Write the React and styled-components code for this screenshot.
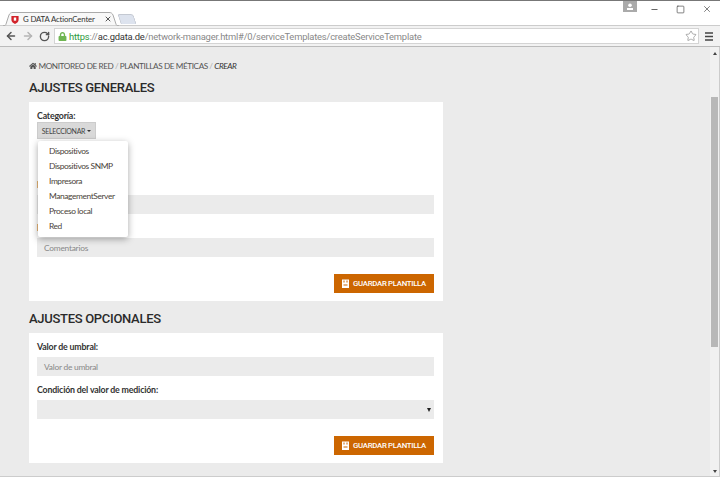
import React from "react"
import styled, { createGlobalStyle } from "styled-components"
import { FaHome, FaLock } from "react-icons/fa"
import { Star, ArrowLeft, ArrowRight, RotateCw, Minus, Square, X } from "lucide-react"

const GlobalStyle = createGlobalStyle`
  html, body { margin: 0; padding: 0; height: 100%; overflow: hidden; }
  * { box-sizing: border-box; }
  body { font-family: "Lato", "Noto Sans", sans-serif; }
`

const Browser = styled.div`
  width: 720px;
  height: 477px;
  display: flex;
  flex-direction: column;
  border-top: 1px solid #777;
  border-bottom: 1px solid #ccc;
  background: #fff;
  overflow: hidden;
`

const TabStrip = styled.div`
  height: 24px;
  flex: none;
  display: flex;
  align-items: flex-end;
  padding-left: 3px;
  background: #fff;
`

const Tab = styled.div`
  width: 115px;
  height: 14px;
  margin-bottom: -1px;
  position: relative;
  display: flex;
  align-items: center;
  gap: 4px;
  padding: 0 6px 0 8px;
  font-size: 7.8px;
  color: #333;
  white-space: nowrap;
  z-index: 1;

  svg { flex: none; position: relative; }
`

const TabShape = styled.svg`
  position: absolute !important;
  left: 0;
  top: 0;
`

const TabTitle = styled.span`
  flex: 1;
  position: relative;
  letter-spacing: -0.15px;
`

const NewTab = styled.div`
  width: 16px;
  height: 10px;
  margin: 0 0 1px 1px;
  background: #dde3ee;
  border: 1px solid #c4c9d2;
  border-bottom: none;
  border-radius: 2px 3px 0 0;
  transform: skewX(18deg);
`

const WindowControls = styled.div`
  margin-left: auto;
  align-self: flex-start;
  display: flex;
  align-items: flex-start;
  padding-right: 8px;
  color: #333;
`

const Profile = styled.div`
  width: 14px;
  height: 11px;
  margin-right: 12px;
  display: flex;
  align-items: center;
  justify-content: center;
  background: #aaa;
`

const WinButton = styled.div`
  width: 10px;
  height: 16px;
  margin-left: ${props => props.gap}px;
  display: flex;
  align-items: center;
  justify-content: center;
`

const Toolbar = styled.div`
  height: 22px;
  flex: none;
  display: flex;
  align-items: center;
  padding: 0 1px 0 2px;
  background: #f2f2f2;
  border-top: 1px solid #ccc;
  border-bottom: 1px solid #bbb;
  color: #555;
`

const NavButton = styled.div`
  width: 17px;
  display: flex;
  justify-content: center;
  color: ${props => props.disabled ? "#b5b5b5" : "#555"};
`

const Omnibox = styled.div`
  flex: 1;
  height: 16px;
  margin-left: 1px;
  display: flex;
  align-items: center;
  padding: 0 1px 0 3px;
  background: #fff;
  border: 1px solid #d4d4d4;
  font-family: "Roboto", sans-serif;
  font-size: 9.4px;
  letter-spacing: -0.2px;
  white-space: nowrap;
  color: #888;
`

const UrlScheme = styled.span`
  color: #2e9a3b;
  margin-left: 2px;
`

const UrlHost = styled.span`
  color: #333;
`

const UrlSpacer = styled.span`
  flex: 1;
`

const MenuButton = styled.div`
  width: 20px;
  display: flex;
  justify-content: center;
  color: #444;
`

const Viewport = styled.div`
  flex: 1;
  display: flex;
  min-height: 0;
  background: #ebebeb;
`

const Page = styled.div`
  flex: 1;
  padding: 12px 0 0 29px;
  overflow: hidden;
`

const Column = styled.div`
  width: 414px;
`

const Breadcrumb = styled.div`
  display: flex;
  align-items: center;
  gap: 1.5px;
  height: 13px;
  font-size: 8.2px;
  letter-spacing: -0.4px;
  color: #555;
  white-space: nowrap;
`

const Crumb = styled.span`
  font-style: ${props => props.current ? "italic" : "normal"};
  color: ${props => props.current ? "#333" : "#555"};
`

const Divider = styled.span`
  color: #aaa;
`

const Heading = styled.h2`
  margin: 7px 0 5px;
  height: 18px;
  line-height: 18px;
  font-family: "Roboto", sans-serif;
  font-size: 13px;
  font-weight: 500;
  letter-spacing: -0.3px;
  color: #2a2a2a;
`

const Card = styled.div`
  background: #fff;
  padding: 7px 9px 8px 8px;
  margin-bottom: 9px;
  position: relative;
`

const Label = styled.label`
  display: block;
  height: 13px;
  line-height: 13px;
  font-size: 8.8px;
  font-weight: 700;
  letter-spacing: -0.18px;
  color: #333;
`

const Field = styled.div`
  margin-top: ${props => props.top || 0}px;
`

const Input = styled.div`
  height: 19px;
  margin-top: 4px;
  padding: 0 7px;
  display: flex;
  align-items: center;
  justify-content: space-between;
  background: #ebebeb;
  font-size: 8.4px;
  letter-spacing: -0.25px;
  color: #888;
`

const Caret = styled.span`
  width: 0;
  height: 0;
  border-left: 2px solid transparent;
  border-right: 2px solid transparent;
  border-top: 4px solid #222;
  margin-right: -4px;
`

const SelectWrap = styled.div`
  position: relative;
`

const SelectButton = styled.div`
  width: 59px;
  height: 17px;
  display: flex;
  align-items: center;
  justify-content: center;
  gap: 2px;
  background: #d9d9d9;
  border: 1px solid #ccc;
  font-size: 7px;
  letter-spacing: -0.3px;
  color: #444;
`

const SmallCaret = styled.span`
  width: 0;
  height: 0;
  border-left: 2.5px solid transparent;
  border-right: 2.5px solid transparent;
  border-top: 2.5px solid #333;
`

const Dropdown = styled.ul`
  position: absolute;
  top: 19px;
  left: 1px;
  width: 90px;
  height: 96px;
  margin: 0;
  padding: 3px 0;
  list-style: none;
  background: #fff;
  border-radius: 2px;
  box-shadow: 0 2px 7px rgba(0, 0, 0, 0.35);
  z-index: 2;
`

const DropItem = styled.li`
  height: 15px;
  line-height: 15px;
  padding-left: 11px;
  font-size: 8.4px;
  letter-spacing: -0.4px;
  color: #4a3f3a;
  white-space: nowrap;
`

const Actions = styled.div`
  display: flex;
  justify-content: flex-end;
  margin-top: 17px;
`

const SaveButton = styled.div`
  width: 100px;
  height: 19px;
  display: flex;
  align-items: center;
  justify-content: center;
  gap: 4px;
  background: #cc6600;
  font-family: "Roboto", sans-serif;
  font-size: 7.8px;
  font-weight: 500;
  letter-spacing: -0.3px;
  color: #fff;
  white-space: nowrap;
`

const Scrollbar = styled.div`
  width: 10px;
  flex: none;
  display: flex;
  flex-direction: column;
  background: #f1f1f1;
  border-right: 1px solid #ccc;
`

const ScrollUp = styled.div`
  width: 0;
  height: 0;
  margin: 5px auto 0;
  border-left: 2.5px solid transparent;
  border-right: 2.5px solid transparent;
  border-bottom: 3px solid #444;
`

const ScrollDown = styled.div`
  width: 0;
  height: 0;
  margin: auto auto 3px;
  border-left: 2.5px solid transparent;
  border-right: 2.5px solid transparent;
  border-top: 3px solid #444;
`

const ScrollThumb = styled.div`
  height: 250px;
  margin: 42px 1px 0 1px;
  background: #b8b8b8;
`

const categories = ["Dispositivos", "Dispositivos SNMP", "Impresora", "ManagementServer", "Proceso local", "Red"]

function SaveIcon() {
  return (
    <svg width="7" height="9" viewBox="0 0 7 9">
      <path d="M0 0.5 H7 V9 H0 Z" fill="#fff" />
      <rect x="1.5" y="1.5" width="1" height="2" fill="#cc6600" />
      <rect x="4.5" y="1.5" width="1" height="2" fill="#cc6600" />
      <rect x="1.5" y="5.5" width="4" height="1" fill="#cc6600" />
    </svg>
  )
}

function Save() {
  return (
    <Actions>
      <SaveButton><SaveIcon />GUARDAR PLANTILLA</SaveButton>
    </Actions>
  )
}

export default function App() {
  return (
    <Browser>
      <GlobalStyle />
      <TabStrip>
        <Tab>
          <TabShape width="118" height="14" viewBox="0 0 118 14">
            <path d="M0 14 C3 14 3 12 4 9 L6 3 C7 1 8 0.5 10 0.5 L106 0.5 C108 0.5 109 1 110 3 L112 9 C113 12 113 14 116 14 Z" fill="#f8f8f8" stroke="#aaa" />
          </TabShape>
          <svg width="8" height="9" viewBox="0 0 10 11">
            <path d="M0.5 1 L9.5 1 L9.5 6 C9.5 8.5 7 10 5 11 C3 10 0.5 8.5 0.5 6 Z" fill="#d2232a" />
            <rect x="3.5" y="3" width="3" height="4" fill="#fff" />
          </svg>
          <TabTitle>G DATA ActionCenter</TabTitle>
          <X size={8} strokeWidth={3} color="#555" />
        </Tab>
        <NewTab />
        <WindowControls>
          <Profile>
            <svg width="8" height="8" viewBox="0 0 8 8">
              <circle cx="4" cy="2.3" r="1.8" fill="#fff" />
              <rect x="1" y="5" width="6" height="2" fill="#fff" />
            </svg>
          </Profile>
          <WinButton gap={0}><Minus size={9} strokeWidth={2} /></WinButton>
          <WinButton gap={16}><Square size={9} strokeWidth={1.6} /></WinButton>
          <WinButton gap={17}><X size={10} strokeWidth={1.5} /></WinButton>
        </WindowControls>
      </TabStrip>
      <Toolbar>
        <NavButton><ArrowLeft size={12} strokeWidth={3} /></NavButton>
        <NavButton disabled><ArrowRight size={12} strokeWidth={3} /></NavButton>
        <NavButton><RotateCw size={11} strokeWidth={3} /></NavButton>
        <Omnibox>
          <FaLock size={9} color="#6fb552" />
          <UrlScheme>https</UrlScheme>://<UrlHost>ac.gdata.de</UrlHost>/network-manager.html#/0/serviceTemplates/createServiceTemplate
          <UrlSpacer />
          <Star size={12} color="#888" strokeWidth={1.4} />
        </Omnibox>
        <MenuButton>
          <svg width="10" height="9" viewBox="0 0 10 9">
            <path d="M1 1 H9 M1 4.5 H9 M1 8 H9" stroke="#444" strokeWidth="1.6" />
          </svg>
        </MenuButton>
      </Toolbar>
      <Viewport>
        <Page>
          <Column>
            <Breadcrumb>
              <FaHome size={8} />
              <Crumb>MONITOREO DE RED</Crumb>
              <Divider>/</Divider>
              <Crumb>PLANTILLAS DE MÉTICAS</Crumb>
              <Divider>/</Divider>
              <Crumb current>CREAR</Crumb>
            </Breadcrumb>
            <Heading>AJUSTES GENERALES</Heading>
            <Card>
              <Label>Categoría:</Label>
              <SelectWrap>
                <SelectButton>SELECCIONAR <SmallCaret /></SelectButton>
                <Dropdown>
                  {categories.map(c => <DropItem key={c}>{c}</DropItem>)}
                </Dropdown>
              </SelectWrap>
              <Field top={39}>
                <Label>Nombre:</Label>
                <Input />
              </Field>
              <Field top={7}>
                <Label>Descripción:</Label>
                <Input>Comentarios</Input>
              </Field>
              <Save />
            </Card>
            <Heading>AJUSTES OPCIONALES</Heading>
            <Card>
              <Label>Valor de umbral:</Label>
              <Input>Valor de umbral</Input>
              <Field top={7}>
                <Label>Condición del valor de medición:</Label>
                <Input><span /><Caret /></Input>
              </Field>
              <Save />
            </Card>
          </Column>
        </Page>
        <Scrollbar>
          <ScrollUp />
          <ScrollThumb />
          <ScrollDown />
        </Scrollbar>
      </Viewport>
    </Browser>
  )
}
